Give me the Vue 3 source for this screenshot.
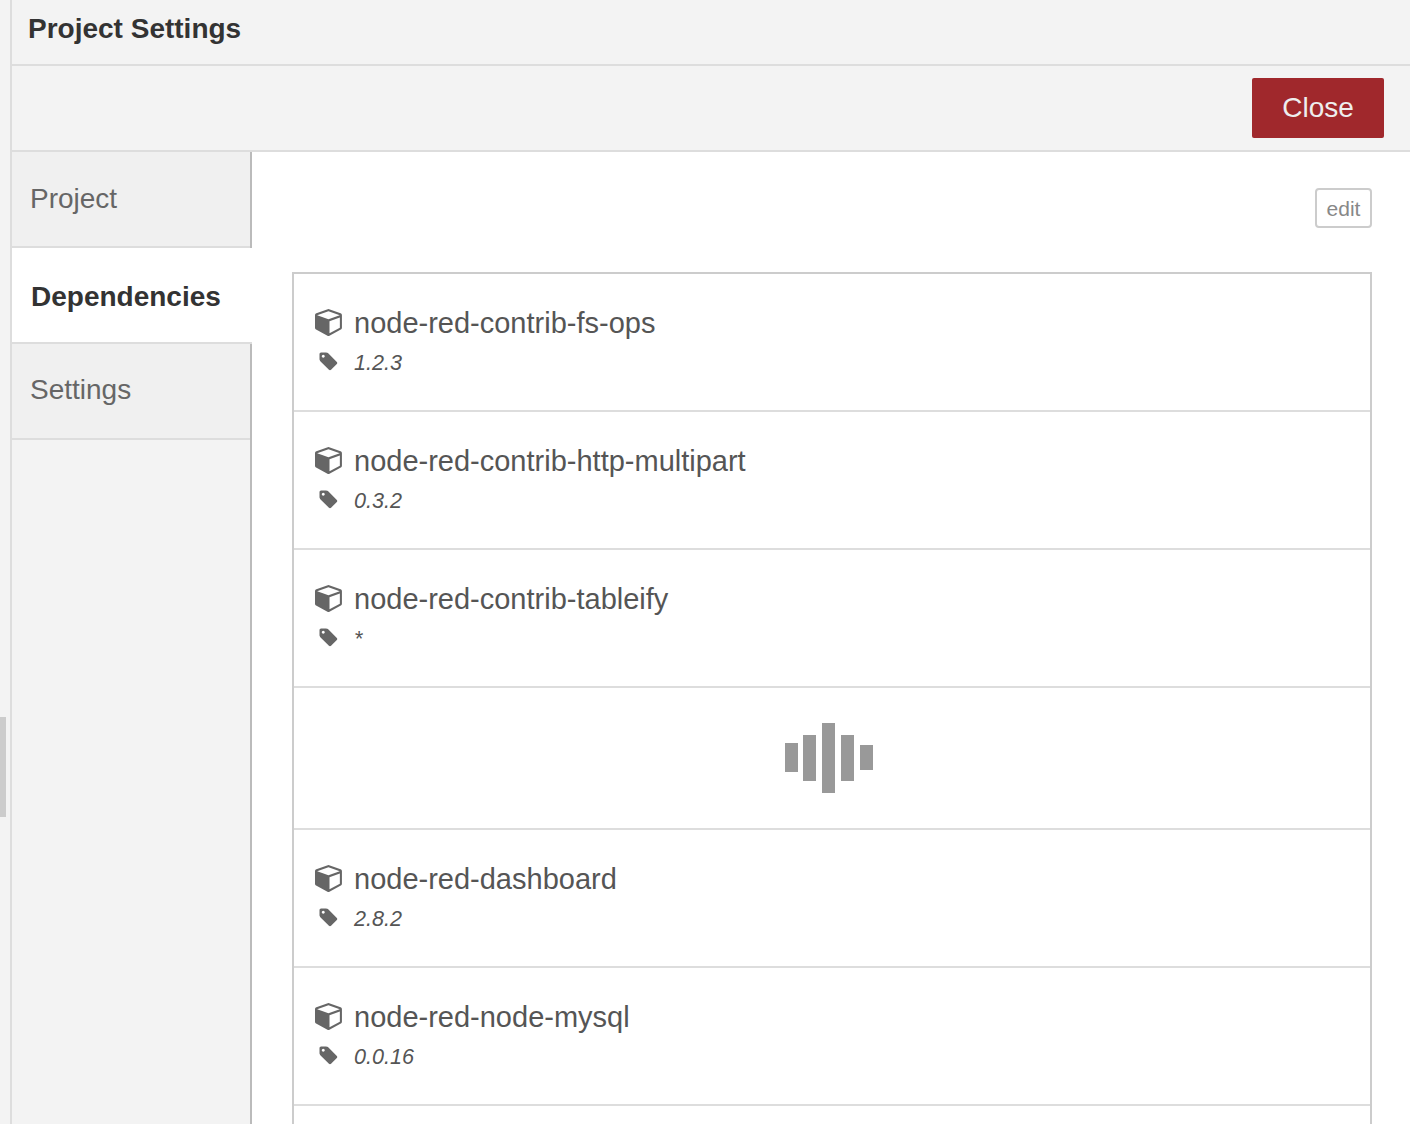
<script setup>
const tabs = [
  { name: 'Project' },
  { name: 'Dependencies', active: true },
  { name: 'Settings' }
]

const rows = [
  { name: 'node-red-contrib-fs-ops', version: '1.2.3' },
  { name: 'node-red-contrib-http-multipart', version: '0.3.2' },
  { name: 'node-red-contrib-tableify', version: '*' },
  { spinner: true },
  { name: 'node-red-dashboard', version: '2.8.2' },
  { name: 'node-red-node-mysql', version: '0.0.16' },
  { empty: true }
]

const bars = [29, 46, 70, 46, 25]
</script>

<template>
  <div class="page">
    <div class="gutter">
      <div class="grip"></div>
    </div>
    <div class="dialog">
      <div class="title">Project Settings</div>
      <div class="toolbar">
        <button class="close">Close</button>
      </div>
      <div class="body">
        <div class="sidebar">
          <div v-for="tab in tabs" :key="tab.name" class="tab" :class="{ active: tab.active }">{{ tab.name }}</div>
        </div>
        <div class="content">
          <div class="actions">
            <button class="edit">edit</button>
          </div>
          <div class="list">
            <div v-for="(row, i) in rows" :key="i" class="row" :class="{ spin: row.spinner }">
              <div v-if="row.spinner" class="bars">
                <span v-for="(h, j) in bars" :key="j" :style="{ height: h + 'px' }"></span>
              </div>
              <template v-else-if="!row.empty">
                <div class="line">
                  <svg class="cube" viewBox="0 0 1792 1792"><path d="M896 1629l640-349v-636l-640 233v752zm-64-865l698-254-698-254-698 254zm832-252v768q0 35-18 65t-49 47l-704 384q-28 16-61 16t-61-16l-704-384q-31-17-49-47t-18-65v-768q0-40 23-73t61-47l704-256q22-8 44-8t44 8l704 256q38 14 61 47t23 73z"/></svg>
                  <span class="name">{{ row.name }}</span>
                </div>
                <div class="line small">
                  <svg class="tag" viewBox="0 0 1792 1792"><path d="M576 448q0-53-37.5-90.5t-90.5-37.5-90.5 37.5-37.5 90.5 37.5 90.5 90.5 37.5 90.5-37.5 37.5-90.5zm1067 576q0 53-37 90l-491 492q-39 37-91 37-53 0-90-37l-715-716q-38-37-64.5-101t-26.5-117v-416q0-52 38-90t90-38h416q53 0 117 26.5t102 64.5l715 714q37 39 37 91z"/></svg>
                  <span class="version">{{ row.version }}</span>
                </div>
              </template>
            </div>
          </div>
        </div>
      </div>
    </div>
  </div>
</template>

<style>
html, body { margin: 0; height: 100%; overflow: hidden; background: #fff; }
</style>

<style scoped>
.page { display: flex; height: 1124px; overflow: hidden; font-family: "Liberation Sans", Arial, sans-serif; background: #f3f3f3; }
.gutter { width: 10px; flex: none; position: relative; }
.grip { position: absolute; left: 0; top: 717px; width: 6px; height: 100px; background: #ccc; }
.dialog { flex: 1; display: flex; flex-direction: column; min-width: 0; border-left: 2px solid #ddd; }
.title { height: 64px; border-bottom: 2px solid #ddd; padding-left: 16px; font-size: 28px; font-weight: 700; line-height: 57px; color: #333; }
.toolbar { height: 86px; border-bottom: 2px solid #ddd; display: flex; justify-content: flex-end; align-items: flex-start; padding: 12px 26px 0 0; box-sizing: border-box; }
.close { width: 132px; height: 60px; background: #a0282c; color: #eee; border: none; border-radius: 2px; font: 28px "Liberation Sans", Arial, sans-serif; padding: 0; }
.body { flex: 1; display: flex; background: #fff; min-height: 0; }
.sidebar { width: 240px; flex: none; background: #f3f3f3; border-right: 2px solid #bbb; box-sizing: border-box; position: relative; }
.tab { height: 94px; border-bottom: 2px solid #ddd; background: #f0f0f0; color: #666; font-size: 28px; line-height: 92px; padding-left: 18px; }
.tab:first-child { line-height: 94px; }
.tab.active { background: #fff; color: #333; font-weight: 700; margin-right: -2px; position: relative; line-height: 98px; padding-left: 19px; }
.content { flex: 1; min-width: 0; padding: 36px 38px 0 40px; }
.actions { display: flex; justify-content: flex-end; height: 84px; }
.edit { width: 57px; height: 40px; background: #fff; border: 2px solid #ccc; border-radius: 4px; color: #888; font: 21px "Liberation Sans", Arial, sans-serif; padding: 1px 0 0; }
.list { border: 2px solid #ccc; border-bottom: none; }
.row { height: 138px; box-sizing: border-box; border-bottom: 2px solid #ddd; padding: 29px 0 0 20px; }
.row.spin { height: 142px; padding: 0 0 1px; display: flex; align-items: center; justify-content: center; }
.bars { display: flex; align-items: center; gap: 5.75px; height: 70px; position: relative; left: -3.5px; }
.bars span { width: 13px; background: #999; }
.line { display: flex; align-items: center; height: 40px; color: #555; font-size: 29px; }
.small { height: 39px; font-size: 21.6px; }
.cube { width: 29px; height: 29px; fill: #666; margin: -4px 10px 0 1px; flex: none; }
.tag { width: 21px; height: 21px; fill: #666; margin: -2px 14px 0 4px; flex: none; }
.version { font-style: italic; margin-left: 1px; }
</style>
